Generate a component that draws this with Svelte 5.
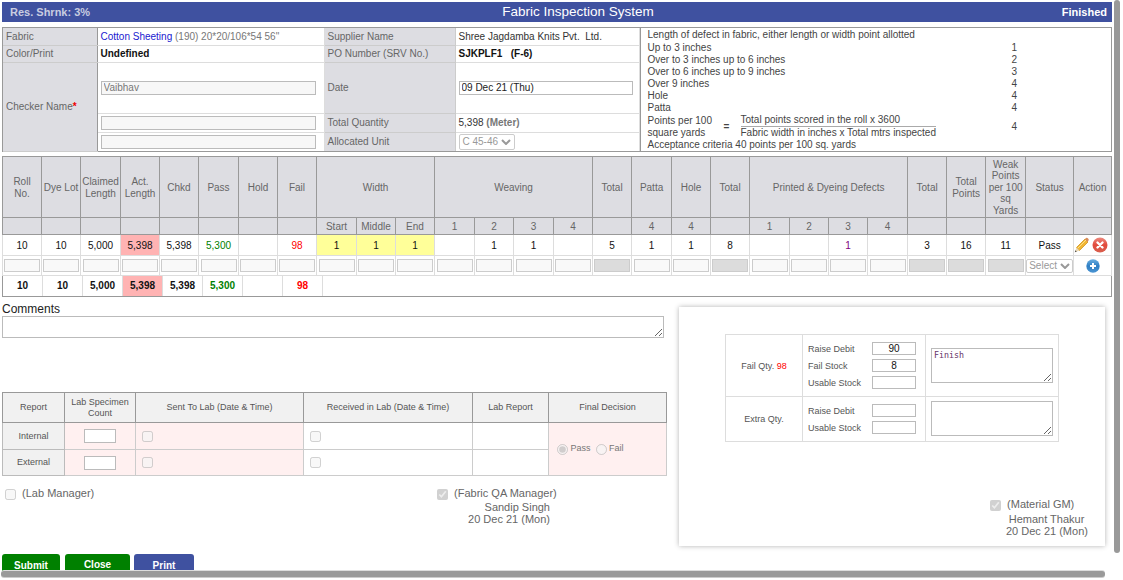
<script>
  const cols = [39,39,40,39,39,40,39,39,40,39,39,40,39,40,39,39,40,39,39,40,39,39,40,39,39,40,48,38];
  const sub = ['','','','','','','','','Start','Middle','End','1','2','3','4','','4','4','','1','2','3','4','','','','',''];
  const row = ['10','10','5,000','5,398','5,398','5,300','','98','1','1','1','','1','1','','5','1','1','8','','','1','','3','16','11','Pass'];
  const colorOf = {5:'green',7:'red',21:'purple'};
  const cls = (i) => (i===3?'pink':'') + (i>=8&&i<=10?' yellow':'');
  const grey = new Set([15,18,23,24,25]);
  const legend = [['Up to 3 inches',1],['Over to 3 inches up to 6 inches',2],['Over to 6 inches up to 9 inches',3],['Over 9 inches',4],['Hole',4],['Patta',4]];
</script>

<div class="page">
  <header class="bar"><span class="shr">Res. Shrnk: 3%</span><h1>Fabric Inspection System</h1><span class="fin">Finished</span></header>

  <section class="info">
    <table class="top">
      <colgroup><col style="width:94px"><col style="width:227px"><col style="width:131px"><col style="width:184px"></colgroup>
      <tbody>
      <tr class="r17"><th>Fabric</th><td><span class="blue">Cotton Sheeting</span> <span class="mut">(190) 20*20/106*54 56"</span></td><th>Supplier Name</th><td>Shree Jagdamba Knits Pvt.&nbsp; Ltd.</td></tr>
      <tr class="r17"><th>Color/Print</th><td><b>Undefined</b></td><th>PO Number (SRV No.)</th><td><b>SJKPLF1 &nbsp; (F-6)</b></td></tr>
      <tr class="r50"><th rowspan="3" class="chk">Checker Name<span class="req">*</span></th><td><input class="f dis w1" value="Vaibhav" /></td><th>Date</th><td><input class="f w2" value="09 Dec 21 (Thu)" /></td></tr>
      <tr class="r19"><td><input class="f dis w1" /></td><th>Total Quantity</th><td>5,398 <b class="mut">(Meter)</b></td></tr>
      <tr class="r19"><td><input class="f dis w1" /></td><th>Allocated Unit</th><td><span class="sel">C 45-46 <svg width="10" height="6" viewBox="0 0 10 6"><path d="M1 1l4 4 4-4" fill="none" stroke="#999" stroke-width="2"/></svg></span></td></tr>
      </tbody>
    </table>
    <div class="legend">
      <div class="lh">Length of defect in fabric, either length or width point allotted</div>
      {#each legend as l}
        <div class="lrow"><span>{l[0]}</span><span class="num">{l[1]}</span></div>
      {/each}
      <div class="lrow formula">
        <span class="pp">Points per 100<br>square yards</span><span class="eq">=</span>
        <span class="frac"><span class="n">Total points scored in the roll x 3600</span><span>Fabric width in inches x Total mtrs inspected</span></span>
        <span class="num">4</span>
      </div>
      <div class="lf">Acceptance criteria 40 points per 100 sq. yards</div>
    </div>
  </section>

  <table class="grid">
    <colgroup>{#each cols as c}<col style="width:{c}px">{/each}</colgroup>
    <thead>
      <tr class="h1">
        <th>Roll<br>No.</th><th>Dye Lot</th><th>Claimed<br>Length</th><th>Act.<br>Length</th><th>Chkd</th><th>Pass</th><th>Hold</th><th>Fail</th>
        <th colspan="3">Width</th><th colspan="4">Weaving</th><th>Total</th><th>Patta</th><th>Hole</th><th>Total</th>
        <th colspan="4">Printed &amp; Dyeing Defects</th><th>Total</th><th>Total<br>Points</th><th>Weak<br>Points<br>per 100<br>sq<br>Yards</th><th>Status</th><th>Action</th>
      </tr>
      <tr class="h2">{#each sub as s}<th>{s}</th>{/each}</tr>
    </thead>
    <tbody>
      <tr class="d">
        {#each row as v, i}<td class={cls(i)} style={colorOf[i] ? `color:${colorOf[i]}` : ''}>{v}</td>{/each}
        <td class="act">
          <svg width="15" height="16" viewBox="0 0 15 16"><path d="M2.500 10.500 11 2l3 3-8.500 8.500z" fill="#f2b632" stroke="#c98a10" stroke-width=".7"/><path d="M4 11 12 3" stroke="#fbe08a" stroke-width="1"/><path d="M11 2l1-1q.8-.5 1.500 0l1 1q.5.8 0 1.500l-1 1.500z" fill="#d98a5a"/><path d="M2.500 10.500.8 15.200l4.700-1.700z" fill="#ecd9b4"/><path d="M.8 15.200l.7-2 1.300 1.300z" fill="#444"/></svg>
          <svg width="16" height="16" viewBox="0 0 16 16"><defs><linearGradient id="rd" x1="0" y1="0" x2="0" y2="1"><stop offset="0" stop-color="#ec8a80"/><stop offset=".5" stop-color="#e24a3c"/><stop offset="1" stop-color="#d8604f"/></linearGradient></defs><circle cx="8" cy="8" r="7.500" fill="url(#rd)"/><path d="M5.500 5.500l5 5M10.500 5.500l-5 5" stroke="#fff" stroke-width="2.400" stroke-linecap="round"/></svg>
        </td>
      </tr>
      <tr class="i">
        {#each cols.slice(0,26) as _, i}<td><input class="cell" class:g={grey.has(i)} /></td>{/each}
        <td><span class="sel mini">Select <svg width="10" height="6" viewBox="0 0 10 6"><path d="M1 1l4 4 4-4" fill="none" stroke="#999" stroke-width="2"/></svg></span></td>
        <td class="add"><svg width="14" height="14" viewBox="0 0 14 14"><defs><linearGradient id="bl" x1="0" y1="0" x2="0" y2="1"><stop offset="0" stop-color="#6aaee0"/><stop offset=".5" stop-color="#2f7fc4"/><stop offset="1" stop-color="#4a94d2"/></linearGradient></defs><circle cx="7" cy="7" r="6.700" fill="url(#bl)"/><path d="M4 7h6M7 4v6" stroke="#fff" stroke-width="2"/></svg></td>
      </tr>
    </tbody>
  </table>
  <div class="totals">
    <b class="t0">10</b><b>10</b><b>5,000</b><b class="pink">5,398</b><b>5,398</b><b class="tg">5,300</b><b></b><b class="tr">98</b>
  </div>

  <div class="cmt">
    <div class="cl">Comments</div>
    <textarea></textarea>
  </div>

  <div class="lower">
    <div class="left">
      <table class="lab">
        <colgroup><col style="width:62px"><col style="width:71px"><col style="width:168px"><col style="width:169px"><col style="width:76px"><col style="width:118px"></colgroup>
        <thead><tr><th>Report</th><th>Lab Specimen<br>Count</th><th>Sent To Lab (Date &amp; Time)</th><th>Received in Lab (Date &amp; Time)</th><th>Lab Report</th><th>Final Decision</th></tr></thead>
        <tbody>
          <tr class="l1"><th>Internal</th><td class="rose c"><input class="sq" /></td><td class="rose"><input type="checkbox" disabled /></td><td><input type="checkbox" disabled /></td><td></td>
            <td rowspan="2" class="rose dec"><input type="radio" checked disabled /> Pass &nbsp;<input type="radio" disabled /> Fail</td></tr>
          <tr class="l2"><th>External</th><td class="rose c"><input class="sq" /></td><td class="rose"><input type="checkbox" disabled /></td><td><input type="checkbox" disabled /></td><td></td></tr>
        </tbody>
      </table>
      <div class="signs">
        <label class="s1"><input type="checkbox" disabled /> (Lab Manager)</label>
        <div class="s2">
          <label><input type="checkbox" checked disabled /> (Fabric QA Manager)</label>
          <div class="who">Sandip Singh<br>20 Dec 21 (Mon)</div>
        </div>
      </div>
      <div class="btns"><button class="gr">Submit</button><button class="gr cl2">Close</button><button class="bl">Print</button></div>
    </div>
    <aside class="card">
      <table class="qty">
        <colgroup><col style="width:77px"><col style="width:123px"><col style="width:133px"></colgroup>
        <tbody>
        <tr class="q1">
          <td class="c">Fail Qty. <span class="red">98</span></td>
          <td class="st">
            <div><span>Raise Debit</span><input class="q" value="90" /></div>
            <div><span>Fail Stock</span><input class="q" value="8" /></div>
            <div><span>Usable Stock</span><input class="q" /></div>
          </td>
          <td class="tc"><textarea class="t1">Finish</textarea></td>
        </tr>
        <tr class="q2">
          <td class="c">Extra Qty.</td>
          <td class="st">
            <div><span>Raise Debit</span><input class="q" /></div>
            <div><span>Usable Stock</span><input class="q" /></div>
          </td>
          <td class="tc"><textarea class="t2"></textarea></td>
        </tr>
        </tbody>
      </table>
      <div class="s3">
        <label><input type="checkbox" checked disabled /> (Material GM)</label>
        <div class="who3">Hemant Thakur<br>20 Dec 21 (Mon)</div>
      </div>
    </aside>
  </div>
  <div class="sbv"></div>
  <div class="sbh"></div>
</div>

<style>
  :global(body){margin:0;background:#fff;overflow:hidden}
  .page{position:relative;width:1123px;height:580px;overflow:hidden;font:10px "Liberation Sans",Arial,sans-serif;color:#555;padding:2px 0 0 2px;box-sizing:border-box}
  .bar{width:1110px;height:20px;background:#3f51a0;color:#fff;display:flex;align-items:center;box-sizing:border-box}
  .bar h1{flex:1;text-align:center;margin:0;font-size:13.500px;font-weight:400;line-height:20px}
  .shr{font-weight:700;color:#c9cde0;font-size:11px;width:110px;padding-left:8px;box-sizing:border-box}
  .fin{font-weight:700;font-size:11px;width:68px;text-align:right;padding-right:5px;box-sizing:border-box}
  table{border-collapse:collapse;table-layout:fixed}
  .info{display:flex;width:1110px;height:125px;margin-top:5px;box-sizing:border-box;border:1px solid #999}
  .top{width:636px;height:123px;flex:none}
  .top th{background:#dddde2;font-weight:400;text-align:left;color:#666;padding:0 3px;border:1px solid #ccc}
  .top td{padding:0 3px;border:1px solid #ddd;color:#333}
  .top tr:first-child>*{border-top:0}
  .top tr:last-child>*{border-bottom:0}
  .top tr>*:first-child{border-left:0}
  .top th:first-child{border-right:1px solid #999}
  .r17{height:17px}.r50{height:51px}.r19{height:19px}
  .top b{color:#111}
  .top .mut,.mut{color:#777}
  .blue{color:#2020d0}
  .req{color:#e00;font-weight:700}
  .f{height:14px;box-sizing:border-box;border:1px solid #bbb;font:10px "Liberation Sans",sans-serif;padding:0 2px;color:#222;display:block}
  .w1{width:215px}.w2{width:174px}
  .dis{background:#f7f7f7;color:#777}
  .sel{display:inline-flex;align-items:center;gap:3px;border:1px solid #ccc;border-radius:2px;color:#999;height:14px;padding:0 3px;font-size:10px}
  .legend{flex:1;border-left:1px solid #999;padding:1px 0 0 7px;line-height:12px;color:#444;font-size:10px}
  .lh{height:13px}
  .lrow{display:flex;height:12px;position:relative}
  .lrow .num{position:absolute;left:364px}
  .formula{height:25px;align-items:center}
  .pp{width:76px}
  .eq{width:17px;font-weight:700;text-align:left}
  .frac{display:flex;flex-direction:column;line-height:12.500px}
  .n{border-bottom:1px solid #aaa}
  .grid{width:1110px;margin-top:4px;border:1px solid #999}
  .grid th{background:#dddde2;font-weight:400;color:#666;text-align:center;padding:1px 0 0;border:1px solid #999;line-height:11.500px}
  .h1{height:61px}.h2{height:17px}
  .d{height:21px}.i{height:20px}
  .grid td{text-align:center;padding:0;border:1px solid #ddd;color:#111;font-size:10px}
  .pink{background:#ffb3b3 !important}
  .yellow{background:#ffff99;color:#333}
  .cell{width:36px;height:13px;box-sizing:border-box;border:1px solid #ccc;display:block;margin:auto;background:#f9f9f9;padding:0}
  .g{background:#dcdcdc}
  .mini{height:12px;padding:0 2px}
  .d .act{white-space:nowrap;padding-right:3px}
  .act svg,.add svg{vertical-align:middle}
  .totals{width:1110px;box-sizing:border-box;height:21px;border:1px solid #999;border-top:0;display:flex;color:#111}
  .totals b{display:block;width:40px;line-height:20px;text-align:center;border-right:1px solid #ddd;box-sizing:border-box;height:20px;font-size:10px}
  .totals .t0{width:40px}
  .totals .tg{color:green}
  .totals .tr{color:red}
  .cmt{margin-top:6px;width:662px}
  .cl{font-size:12px;color:#222;line-height:13px}
  .cmt textarea{display:block;width:662px;height:22px;box-sizing:border-box;border:1px solid #bbb;margin:0;padding:0}
  .lower{display:flex;align-items:flex-start;margin-top:-31px}
  .left{width:677px;flex:none;padding-top:85px}
  .lab{width:664px;border:1px solid #888;font-size:9px}
  .lab th{background:#f1f1f1;font-weight:400;color:#555;border:1px solid #999;line-height:11px;padding:0}
  .lab thead tr{height:30px}
  .lab tbody th{border-color:#bbb}
  .l1{height:27px}.l2{height:26px}
  .lab td{border:1px solid #ccc;padding:0 0 0 6px}
  .rose{background:#fff0f0}
  .c{text-align:center;padding:0 !important}
  .sq{width:32px;height:14px;border:1px solid #bbb;box-sizing:border-box;background:#fff;vertical-align:middle}
  input[type=checkbox],input[type=radio]{margin:0;width:11px;height:11px;vertical-align:middle}
  .dec{text-align:left;padding-left:8px !important;color:#777}
  .signs{display:flex;height:58px;margin-top:11px;font-size:11px;color:#666;padding-left:3px}
  .signs input,.s3 input{margin-right:3px}
  .s1{width:432px;flex:none;height:14px}
  .s2{width:113px;flex:none;white-space:nowrap}
  .who{text-align:right;line-height:12.500px;margin-top:1px}
  .btns{display:flex;gap:5px;margin-top:9px}
  .btns button{border:0;border-radius:3px 3px 0 0;color:#fff;font:700 10px "Liberation Sans",sans-serif;height:22px;padding:0}
  .gr{background:#008000;width:58px}
  .cl2{width:65px;padding-bottom:2px !important}
  .bl{background:#3f51a0;width:60px;margin-left:-1px}
  .card{width:426px;height:239px;box-sizing:border-box;background:#fff;box-shadow:0 0 5px rgba(0,0,0,.3);padding-top:27px}
  .qty{width:333px;border:1px solid #ddd;font-size:9px;margin-left:46px}
  .qty td{border:1px solid #ddd;padding:0}
  .q1{height:62px}.q2{height:45px}
  .st{padding:0 0 0 5px !important}
  .st div{display:flex;justify-content:space-between;align-items:center;width:108px;height:17px}
  .q{width:44px;height:13px;box-sizing:border-box;border:1px solid #bbb;text-align:center;font:10px "Liberation Sans",sans-serif;padding:0;color:#111}
  .red{color:#f00}
  .tc{padding:0 5px !important}
  .qty textarea{display:block;width:122px;box-sizing:border-box;border:1px solid #bbb;margin:0;padding:1px 2px;font:8.300px "DejaVu Sans Mono",monospace;color:#636}
  .t1{height:35px}
  .qty .t2{height:35px;margin-bottom:2px}
  .s3{margin:56px 0 0 311px;font-size:11px;color:#666;width:97px;white-space:nowrap}
  .who3{text-align:center;line-height:12.500px;margin:2px 0 0 16px;width:81px}
  .sbv{position:absolute;left:1114px;top:0;width:6px;height:553px;background:#999;border-radius:3px}
  .sbh{position:absolute;left:1px;top:571px;width:1104px;height:6px;background:#9a9a9a;border-radius:3px;box-shadow:0 1px 0 #ccc,0 -1px 0 #ddd}
</style>
